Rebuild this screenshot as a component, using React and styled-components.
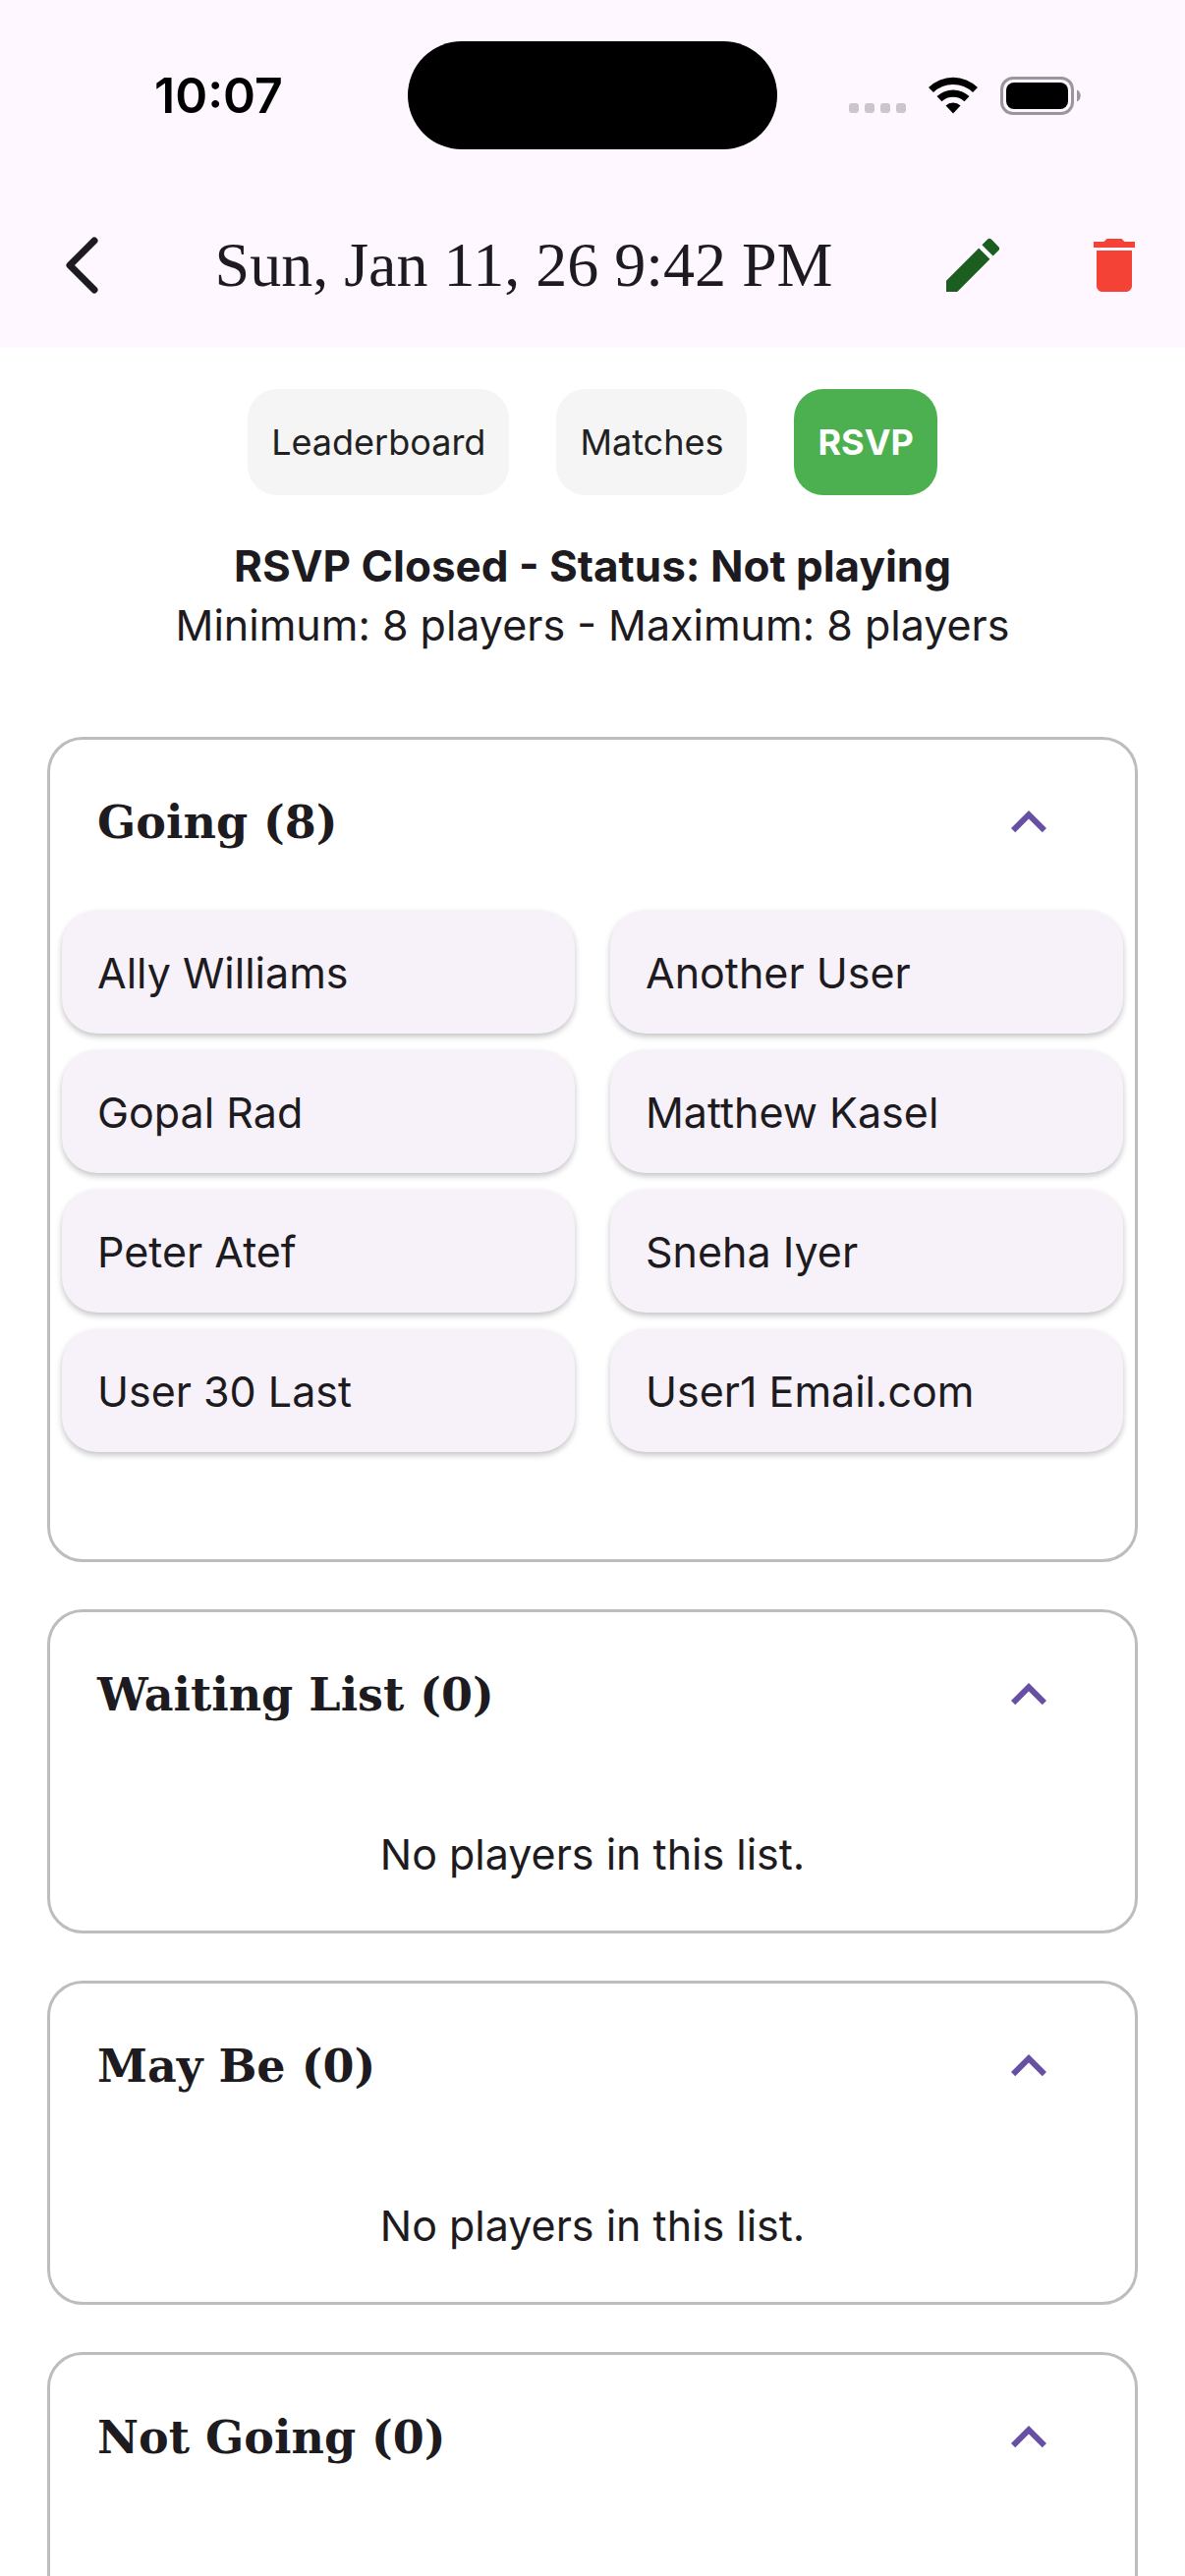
import { useState } from "react";
import styled, { createGlobalStyle } from "styled-components";
import { MdDelete, MdEdit, MdExpandLess } from "react-icons/md";

const tabs = ["Leaderboard", "Matches", "RSVP"];

const lists = [
  {
    title: "Going",
    players: [
      "Ally Williams",
      "Another User",
      "Gopal Rad",
      "Matthew Kasel",
      "Peter Atef",
      "Sneha Iyer",
      "User 30 Last",
      "User1 Email.com",
    ],
  },
  { title: "Waiting List", players: [] },
  { title: "May Be", players: [] },
  { title: "Not Going", players: [] },
];

const PlayerList = ({ title, players }) => {
  const [open, setOpen] = useState(true);

  return (
    <Card>
      <CardHeading>
        <CardToggle type="button" aria-expanded={open} onClick={() => setOpen(!open)}>
          {title} ({players.length})
          <Chevron $open={open} />
        </CardToggle>
      </CardHeading>
      {open && players.length > 0 && (
        <PlayerGrid>
          {players.map((name) => (
            <Player key={name}>{name}</Player>
          ))}
        </PlayerGrid>
      )}
      {open && players.length === 0 && <Empty>No players in this list.</Empty>}
    </Card>
  );
};

const App = () => {
  const [active, setActive] = useState("RSVP");

  return (
    <Screen>
      <GlobalStyle />
      <Header>
        <StatusBar>
          <Time>10:07</Time>
          <Island />
          <StatusIcons>
            <svg width="58" height="38" viewBox="0 0 58 38" fill="#cbc5cd">
              <rect x="0" y="27" width="10" height="10" rx="3" />
              <rect x="16" y="27" width="10" height="10" rx="3" />
              <rect x="32" y="27" width="10" height="10" rx="3" />
              <rect x="48" y="27" width="10" height="10" rx="3" />
            </svg>
            <svg width="52" height="38" viewBox="0 0 52 38">
              <path d="M1 11a35.500 35.500 0 0 1 50 0l-5 5a29 29 0 0 0-40 0z" />
              <path d="M9.500 20a24 24 0 0 1 33 0l-5 5.200a17 17 0 0 0-23 0z" />
              <path d="M18.500 29.500a11 11 0 0 1 15 0L26 37.500z" />
            </svg>
            <svg width="82" height="39" viewBox="0 0 82 39">
              <rect x="1.5" y="1.5" width="72" height="36" rx="11.5" fill="none" stroke="#9b969d" strokeWidth="3" />
              <rect x="6" y="6" width="63" height="27" rx="8" />
              <path d="M78 13.500c5 2 5 10 0 12z" fill="#9b969d" />
            </svg>
          </StatusIcons>
        </StatusBar>
        <Toolbar>
          <BackButton type="button" aria-label="Back">
            <svg width="34" height="58" viewBox="0 0 34 58" fill="none" stroke="#1d1b20" strokeWidth="7" strokeLinecap="round" strokeLinejoin="round">
              <path d="M29 4 4 29l25 25" />
            </svg>
          </BackButton>
          <Title>Sun, Jan 11, 26 9:42 PM</Title>
          <IconButton type="button" aria-label="Edit" $color="#1b5e20">
            <MdEdit />
          </IconButton>
          <IconButton type="button" aria-label="Delete" $color="#f44336">
            <MdDelete />
          </IconButton>
        </Toolbar>
      </Header>
      <Main>
        <Tabs>
          {tabs.map((tab) => (
            <Tab key={tab} type="button" $active={tab === active} onClick={() => setActive(tab)}>
              {tab}
            </Tab>
          ))}
        </Tabs>
        <Summary>
          <Status>RSVP Closed - Status: Not playing</Status>
          <span>Minimum: 8 players - Maximum: 8 players</span>
        </Summary>
        <Lists>
          {lists.map((list) => (
            <PlayerList key={list.title} {...list} />
          ))}
        </Lists>
      </Main>
    </Screen>
  );
};

const GlobalStyle = createGlobalStyle`
  * {
    box-sizing: border-box;
  }
  body {
    margin: 0;
    background: #ffffff;
    color: #1d1b20;
    font-family: Inter, "Liberation Sans", sans-serif;
    font-size: 43px;
    line-height: 60px;
  }
  button {
    border: 0;
    padding: 0;
    background: none;
    color: inherit;
    font: inherit;
    cursor: pointer;
  }
`;

const Screen = styled.div`
  display: flex;
  flex-direction: column;
  height: 100vh;
`;

const Header = styled.header`
  flex-shrink: 0;
  background: #fef7ff;
`;

const StatusBar = styled.div`
  display: grid;
  grid-template-columns: 1fr auto 1fr;
  align-items: center;
  height: 186px;
  padding-top: 8px;
`;

const Time = styled.div`
  padding-left: 30px;
  text-align: center;
  color: #000000;
  font-size: 50px;
  font-weight: 600;
`;

const Island = styled.div`
  width: 376px;
  height: 110px;
  border-radius: 55px;
  background: #000000;
`;

const StatusIcons = styled.div`
  display: flex;
  align-items: center;
  justify-content: flex-end;
  gap: 22px;
  padding-right: 106px;
`;

const Toolbar = styled.div`
  display: flex;
  align-items: center;
  height: 168px;
`;

const BackButton = styled.button`
  display: flex;
  align-items: center;
  justify-content: center;
  width: 168px;
  height: 144px;
`;

const Title = styled.h1`
  flex: 1;
  margin: 0;
  padding-right: 20px;
  text-align: center;
  white-space: nowrap;
  font-family: "Liberation Serif", serif;
  font-size: 64px;
  font-weight: 400;
`;

const IconButton = styled.button`
  display: flex;
  align-items: center;
  justify-content: center;
  width: 144px;
  height: 144px;
  color: ${({ $color }) => $color};

  svg {
    width: 72px;
    height: 72px;
  }
`;

const Main = styled.main`
  flex: 1;
  min-height: 0;
  overflow-y: auto;
  scrollbar-width: none;
  padding: 42px 48px 48px;
`;

const Tabs = styled.nav`
  display: flex;
  justify-content: center;
  gap: 48px;
`;

const Tab = styled.button`
  height: 108px;
  padding: 0 24px;
  border-radius: 30px;
  background: ${({ $active }) => ($active ? "#4caf50" : "#f5f5f5")};
  color: ${({ $active }) => ($active ? "#ffffff" : "#212121")};
  font-size: 36px;
  font-weight: ${({ $active }) => ($active ? 700 : 400)};
`;

const Summary = styled.div`
  display: flex;
  flex-direction: column;
  align-items: center;
  margin: 42px 0 84px;
`;

const Status = styled.strong`
  font-size: 44px;
  font-weight: 700;
`;

const Lists = styled.div`
  display: flex;
  flex-direction: column;
  gap: 48px;
`;

const Card = styled.section`
  border: 3px solid #bdbdbd;
  border-radius: 36px;
`;

const CardHeading = styled.h2`
  margin: 0;
  font-family: "DejaVu Serif", serif;
  font-size: 46px;
  font-weight: 700;
`;

const CardToggle = styled.button`
  display: flex;
  align-items: center;
  justify-content: space-between;
  width: 100%;
  height: 168px;
  padding: 0 72px 0 48px;
`;

const Chevron = styled(MdExpandLess)`
  width: 72px;
  height: 72px;
  color: #6750a4;
  transform: ${({ $open }) => ($open ? "none" : "rotate(180deg)")};
`;

const PlayerGrid = styled.ul`
  display: grid;
  grid-template-columns: 1fr 1fr;
  gap: 17px 36px;
  margin: 0;
  padding: 6px 12px 109px;
  list-style: none;
`;

const Player = styled.li`
  display: flex;
  align-items: center;
  height: 125px;
  padding: 0 36px;
  border-radius: 36px;
  background: #f7f2fa;
  box-shadow: 0 3px 6px rgba(0, 0, 0, 0.24);
`;

const Empty = styled.p`
  margin: 0;
  padding: 48px 24px;
  text-align: center;
`;

export default App;
